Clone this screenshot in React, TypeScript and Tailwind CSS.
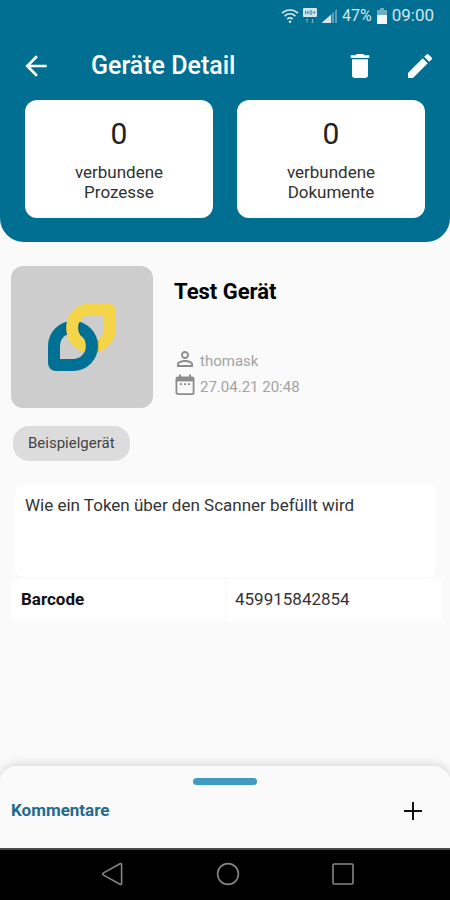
import type { ReactNode } from "react";
import { MdArrowBack, MdDelete, MdEdit, MdPersonOutline } from "react-icons/md";

type Device = {
  name: string;
  owner: string;
  createdAt: string;
  tag: string;
  description: string;
  fields: { label: string; value: string }[];
};

const device: Device = {
  name: "Test Gerät",
  owner: "thomask",
  createdAt: "27.04.21 20:48",
  tag: "Beispielgerät",
  description: "Wie ein Token über den Scanner befüllt wird",
  fields: [{ label: "Barcode", value: "459915842854" }],
};

const StatusBar = () => (
  <div className="flex h-8 items-center justify-end gap-1 pr-4 text-[#d3e6ee]">
    <svg width="18" height="16" viewBox="0 0 18 16" fill="none" stroke="currentColor" strokeWidth="1.7">
      <path d="M1 5.2C5.6.9 12.4.9 17 5.2" />
      <path d="M3.6 8.2c3.2-3 7.6-3 10.8 0" />
      <path d="M6.2 11.1c1.7-1.5 3.9-1.5 5.6 0" />
      <circle cx="9" cy="13.7" r="1.3" fill="currentColor" stroke="none" />
    </svg>
    <svg width="14" height="16" viewBox="0 0 14 16" fill="none">
      <rect x="0" y="0" width="14" height="9" rx="1" fill="currentColor" />
      <path d="M2.5 2.5v4M5 2.5v4M2.5 4.5H5M7 2.8h1.8v3.4H7zM10.2 4.5h2.4M11.4 3.3v2.4" stroke="#4b93ad" />
      <path d="M4 15v-4M2.8 12.2 4 11l1.2 1.2M9.5 11v4M8.3 13.8 9.5 15l1.2-1.2" stroke="#6fafc6" />
    </svg>
    <svg width="17" height="16" viewBox="0 0 17 16">
      <path d="M1 15h3v-3.2L1 14.6zM4 15h3V9.2L4 11.8zM7 15h3V6.6L7 9.2z" fill="currentColor" />
      <path d="M10.5 15H13V3.8l-2.5 2.2zM14 15h2V1l-2 1.7z" fill="#5b9fb8" />
    </svg>
    <span className="text-base">47%</span>
    <svg width="12" height="16" viewBox="0 0 12 16">
      <path d="M4 0h4v2h3v5H1V2h3z" fill="#72acc2" />
      <path d="M1 7h10v9H1z" fill="#f2f8fa" />
    </svg>
    <span className="text-[17px]">09:00</span>
  </div>
);

const CountCard = ({ count, noun }: { count: number; noun: string }) => (
  <a
    href="#"
    className="flex flex-col items-center rounded-xl bg-white pt-4 pb-4 text-center text-[17px] leading-5 text-[#303030]"
  >
    <span className="mb-2.5 text-3xl leading-9 text-[#222]">{count}</span>
    <span>verbundene</span>
    <span>{noun}</span>
  </a>
);

const YELLOW_ARC = "M28.3 13A19.2 19.2 0 0 0 28.3 37";
const YELLOW_LOOP = "M43 6H60Q62 6 62 8V25A19 19 0 1 1 43 6Z";
const BLUE_LOOP = "M25 62H8Q6 62 6 60V43A19 19 0 1 1 25 62Z";

const LinkedLoopsLogo = () => (
  <svg width="68" height="68" viewBox="0 0 68 68" fill="none" strokeWidth="12" strokeLinejoin="round">
    <mask id="blue-loop" maskUnits="userSpaceOnUse" x="0" y="0" width="68" height="68">
      <path d={BLUE_LOOP} stroke="#fff" />
    </mask>
    <mask id="yellow-loop" maskUnits="userSpaceOnUse" x="0" y="0" width="68" height="68">
      <path d={YELLOW_LOOP} stroke="#fff" />
    </mask>
    <path d={YELLOW_LOOP} stroke="#f4d54a" />
    <path d="M44 37V50" stroke="#dfb92f" strokeWidth="14" mask="url(#yellow-loop)" />
    <path d={BLUE_LOOP} stroke="#007094" />
    <path d={YELLOW_ARC} stroke="#005878" strokeWidth="14" mask="url(#blue-loop)" />
    <path d={YELLOW_ARC} stroke="#f4d54a" />
  </svg>
);

const CalendarIcon = () => (
  <svg width="22" height="22" viewBox="0 0 22 22" fill="none" stroke="#8c8c8c">
    <rect x="2.4" y="3.4" width="17.2" height="16.8" rx="1.6" strokeWidth="1.8" />
    <path d="M2.4 5.4h17.2" strokeWidth="4" />
    <path d="M6 0.5v3M16 0.5v3" strokeWidth="2" />
    <path d="M6 10.2h2M10 10.2h2M14 10.2h2" strokeWidth="1.8" />
  </svg>
);

const MetaRow = ({ icon, children }: { icon: ReactNode; children: ReactNode }) => (
  <div className="flex h-[26px] items-center gap-1">
    <span className="flex w-[22px] justify-center">{icon}</span>
    <span className="pt-1">{children}</span>
  </div>
);

const NavigationBar = () => (
  <nav className="grid h-[52px] grid-cols-3 items-center border-t-2 border-[#4a4a4a] bg-black pr-[50px] pb-0.5 pl-14 text-[#858585]">
    <button aria-label="Zurück" className="flex justify-center">
      <svg width="24" height="24" viewBox="0 0 24 24" fill="none" stroke="currentColor" strokeWidth="1.6">
        <path d="M19 1.8 2.6 10.9q-1.8 1.1 0 2.2L19 22.2q1.6.6 1.6-1V2.8q0-1.6-1.6-1z" />
      </svg>
    </button>
    <button aria-label="Startseite" className="flex justify-center">
      <svg width="24" height="24" viewBox="0 0 24 24" fill="none" stroke="currentColor" strokeWidth="1.6">
        <circle cx="12" cy="12" r="10.4" />
      </svg>
    </button>
    <button aria-label="Übersicht" className="flex justify-center">
      <svg width="24" height="24" viewBox="0 0 24 24" fill="none" stroke="currentColor" strokeWidth="1.6">
        <rect x="2" y="2" width="20" height="20" rx="1" />
      </svg>
    </button>
  </nav>
);

export default function App() {
  return (
    <div className="flex min-h-screen flex-col bg-[#fafafa] font-['Roboto',sans-serif] text-black">
      <header className="rounded-b-3xl bg-[#006f92] pb-6">
        <StatusBar />
        <div className="flex h-[68px] items-center pr-3.5 pl-5 text-white">
          <button aria-label="Zurück">
            <MdArrowBack size={32} />
          </button>
          <h1 className="ml-[39px] flex-1 text-[25px] font-medium">{"Geräte Detail"}</h1>
          <button aria-label="Löschen" className="mr-7">
            <MdDelete size={32} />
          </button>
          <button aria-label="Bearbeiten">
            <MdEdit size={32} />
          </button>
        </div>
        <div className="grid grid-cols-2 gap-6 px-[25px]">
          <CountCard count={0} noun="Prozesse" />
          <CountCard count={0} noun="Dokumente" />
        </div>
      </header>

      <main className="flex-1 pt-6 pr-[9px] pl-[11px]">
        <section className="flex gap-[21px]">
          <div className="flex size-[142px] items-center justify-center rounded-xl bg-[#cdcdcd]">
            <LinkedLoopsLogo />
          </div>
          <div className="flex flex-col justify-between pt-3 pb-2.5">
            <h2 className="text-[22px] leading-7 font-bold">{device.name}</h2>
            <div className="text-[15px] text-[#a3a3a3]">
              <MetaRow icon={<MdPersonOutline size={24} className="shrink-0 text-[#8c8c8c]" />}>
                {device.owner}
              </MetaRow>
              <MetaRow icon={<CalendarIcon />}>{device.createdAt}</MetaRow>
            </div>
          </div>
        </section>

        <div className="mt-[18px] ml-0.5 flex">
          <span className="rounded-2xl bg-[#dcdcdc] px-[15px] text-[15px] leading-[35px] text-[#444]">
            {device.tag}
          </span>
        </div>

        <p className="mr-[5px] mt-6 ml-1 min-h-[92px] rounded-lg bg-white px-2.5 py-2 text-[17px] leading-6 text-[#333]">
          {device.description}
        </p>

        <table className="mt-0.5 w-full table-fixed">
          <tbody>
            {device.fields.map(({ label, value }) => (
              <tr key={label} className="h-[42px] bg-white">
                <th className="border-r-2 border-[#fafafa] px-2.5 text-left text-[17px] font-bold text-[#111]">
                  {label}
                </th>
                <td className="px-2 text-[17px] text-[#333]">{value}</td>
              </tr>
            ))}
          </tbody>
        </table>
      </main>

      <section className="rounded-t-2xl bg-[#fafafa] px-[11px] pt-3 pb-[21px] shadow-[0_-2px_10px_rgba(0,0,0,0.14)]">
        <button aria-label="Kommentare öffnen" className="mx-auto block h-[7px] w-16 rounded-full bg-[#3f9bc0]" />
        <div className="mt-2.5 flex h-8 items-center justify-between">
          <h2 className="text-[17px] font-bold text-[#1f6b8f]">Kommentare</h2>
          <button aria-label="Kommentar hinzufügen" className="mr-4">
            <svg width="20" height="20" viewBox="0 0 20 20" fill="none" stroke="#111" strokeWidth="2">
              <path d="M10 1v18M1 10h18" />
            </svg>
          </button>
        </div>
      </section>

      <NavigationBar />
    </div>
  );
}
